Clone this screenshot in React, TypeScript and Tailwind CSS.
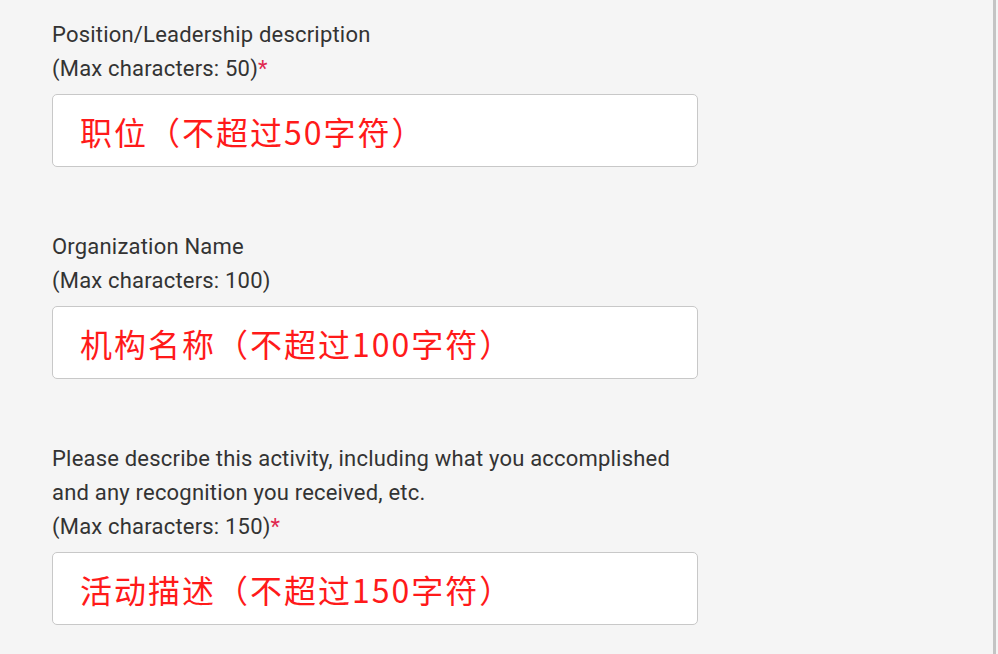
const fields = [
  {
    lines: ['Position/Leadership description'],
    max: 'Max characters: 50',
    required: true,
    value: '职位（不超过50字符）',
  },
  {
    lines: ['Organization Name'],
    max: 'Max characters: 100',
    required: false,
    value: '机构名称（不超过100字符）',
  },
  {
    lines: ['Please describe this activity, including what you accomplished', 'and any recognition you received, etc.'],
    max: 'Max characters: 150',
    required: true,
    value: '活动描述（不超过150字符）',
  },
];

export default function App() {
  return (
    <div className="flex h-[654px] w-[998px] bg-[#f5f5f5] font-['Roboto','Noto_Sans_CJK_SC',sans-serif]">
      <div className="flex flex-1 flex-col gap-[63px] pl-[52px] pt-[18px]">
        {fields.map((f) => (
          <div key={f.max} className="flex w-[646px] flex-col gap-[8px]">
            <div className="text-[22px] leading-[34px] tracking-[0.2px] text-[#333333]">
              {f.lines.map((l) => (
                <div key={l}>{l}</div>
              ))}
              <div>
                ({f.max}){f.required && <span className="text-[#e0284f]">*</span>}
              </div>
            </div>
            <div className="flex h-[73px] items-center rounded-[5px] border border-[#c8c8c8] bg-white pl-[27px] pr-[26px]">
              <span className="text-[32px] tracking-[2px] text-[#ff1a1a] font-['Noto_Sans_CJK_SC',sans-serif]">{f.value}</span>
            </div>
          </div>
        ))}
      </div>
      <div className="w-[2px] bg-[#f5f5f5]" />
      <div className="w-[3px] bg-[#c4c4c4]" />
      <div className="w-[2px] bg-[#f5f5f5]" />
    </div>
  );
}
